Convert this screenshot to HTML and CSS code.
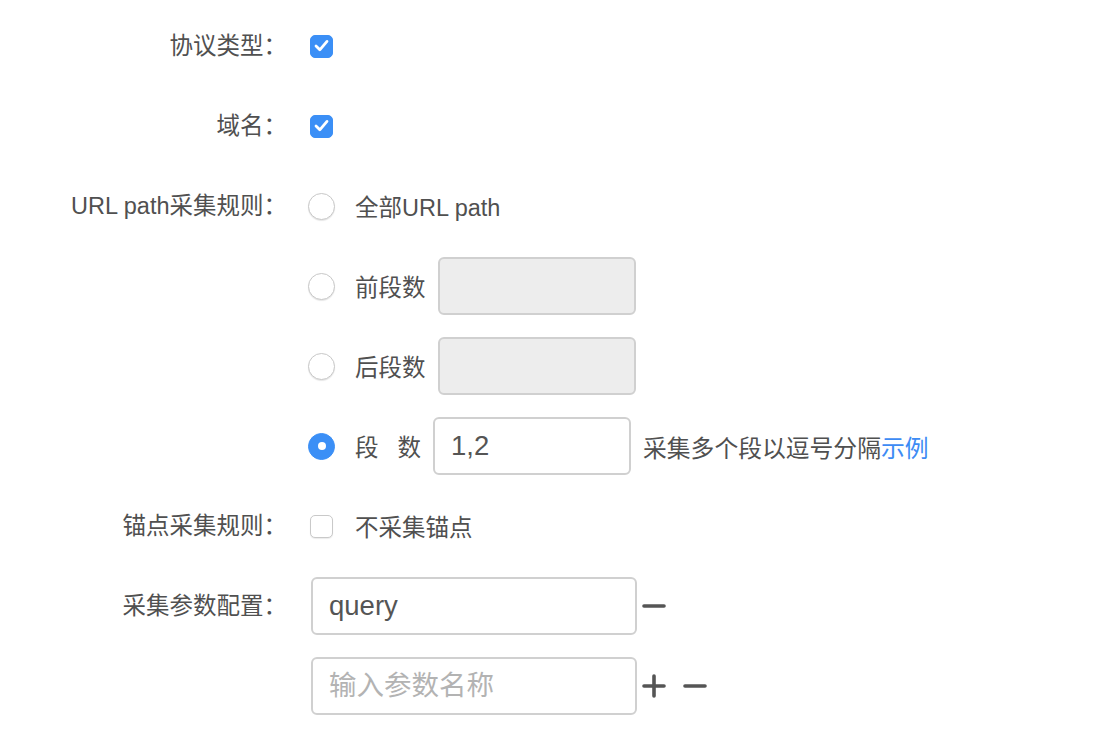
FILE: index.html
```html
<!DOCTYPE html>
<html lang="zh-CN">
<head>
<meta charset="utf-8">
<title>采集规则</title>
<link rel="stylesheet" href="styles.css">
</head>
<body>
<form class="form">
  <div class="item">
    <div class="label">协议类型：</div>
    <div class="controls">
      <div class="line"><span class="slot"><span class="checkbox checked"><svg viewBox="0 0 23 23" width="23" height="23"><path d="M6 12 L9.8 15.8 L17 7.4" fill="none" stroke="#fff" stroke-width="2.8" stroke-linecap="round" stroke-linejoin="round"/></svg></span></span></div>
    </div>
  </div>
  <div class="item">
    <div class="label">域名：</div>
    <div class="controls">
      <div class="line"><span class="slot"><span class="checkbox checked"><svg viewBox="0 0 23 23" width="23" height="23"><path d="M6 12 L9.8 15.8 L17 7.4" fill="none" stroke="#fff" stroke-width="2.8" stroke-linecap="round" stroke-linejoin="round"/></svg></span></span></div>
    </div>
  </div>
  <div class="item">
    <div class="label">URL path采集规则：</div>
    <div class="controls">
      <div class="line"><span class="slot"><span class="radio"></span></span><span class="opt">全部URL path</span></div>
      <div class="line"><span class="slot"><span class="radio"></span></span><span class="opt">前段数</span><input class="input short" type="text" disabled></div>
      <div class="line"><span class="slot"><span class="radio"></span></span><span class="opt">后段数</span><input class="input short" type="text" disabled></div>
      <div class="line"><span class="slot"><span class="radio checked"></span></span><span class="opt">段<span class="spaced">数</span></span><input class="input short" type="text" value="1,2"><span class="hint">采集多个段以逗号分隔<a class="link" href="#">示例</a></span></div>
    </div>
  </div>
  <div class="item">
    <div class="label">锚点采集规则：</div>
    <div class="controls">
      <div class="line"><span class="slot"><span class="checkbox"></span></span><span class="opt">不采集锚点</span></div>
    </div>
  </div>
  <div class="item">
    <div class="label">采集参数配置：</div>
    <div class="controls">
      <div class="line"><input class="input long" type="text" value="query"><span class="icons"><svg class="icon" viewBox="0 0 24 24" width="24" height="24"><line x1="2" y1="12" x2="22" y2="12" stroke="#555" stroke-width="3.6" stroke-linecap="round"/></svg></span></div>
      <div class="line"><input class="input long" type="text" placeholder="输入参数名称"><span class="icons"><svg class="icon" viewBox="0 0 24 24" width="24" height="24"><line x1="2" y1="12" x2="22" y2="12" stroke="#555" stroke-width="3.6" stroke-linecap="round"/><line x1="12" y1="2" x2="12" y2="22" stroke="#555" stroke-width="3.6" stroke-linecap="round"/></svg><svg class="icon" viewBox="0 0 24 24" width="24" height="24"><line x1="2" y1="12" x2="22" y2="12" stroke="#555" stroke-width="3.6" stroke-linecap="round"/></svg></span></div>
    </div>
  </div>
</form>
</body>
</html>
```

FILE: styles.css
```css
html, body {
  margin: 0;
  padding: 0;
  background: #fff;
}

body {
  font-family: "Liberation Sans", "Noto Sans CJK SC", sans-serif;
  font-size: 23.5px;
  color: #505050;
}

.form {
  padding-top: 17px;
}

.item {
  display: grid;
  grid-template-columns: 287px 1fr;
  column-gap: 21px;
  margin-bottom: 22px;
}

.label {
  height: 58px;
  line-height: 58px;
  text-align: right;
  white-space: nowrap;
}

.controls {
  display: flex;
  flex-direction: column;
  gap: 22px;
}

.line {
  display: flex;
  align-items: center;
  height: 58px;
  white-space: nowrap;
}

.slot {
  width: 27px;
  height: 27px;
  display: flex;
  align-items: center;
  justify-content: center;
  flex: none;
}

.checkbox {
  width: 23px;
  height: 23px;
  box-sizing: border-box;
  border-radius: 5px;
  border: 1.5px solid #c9c9c9;
  background: #fff;
  box-shadow: 0 1px 1px rgba(0, 0, 0, 0.08);
  display: block;
  position: relative;
}

.checkbox.checked {
  background: #3b8ff6;
  border-color: #3b8ff6;
  box-shadow: none;
}

.checkbox svg {
  position: absolute;
  left: -1.5px;
  top: -1.5px;
}

.radio {
  width: 27px;
  height: 27px;
  box-sizing: border-box;
  border-radius: 50%;
  border: 1.5px solid #c8c8c8;
  background: #fff;
  box-shadow: 0 1px 1px rgba(0, 0, 0, 0.1);
  display: block;
  position: relative;
}

.radio.checked {
  border-color: #3b8ff6;
  background: #3b8ff6;
  box-shadow: none;
}

.radio.checked::after {
  content: "";
  position: absolute;
  left: 50%;
  top: 50%;
  width: 8px;
  height: 8px;
  margin: -4px 0 0 -4px;
  border-radius: 50%;
  background: #fff;
}

.opt {
  margin-left: 20px;
  margin-right: 12px;
}

.spaced {
  margin-left: 19px;
}

.input {
  box-sizing: border-box;
  height: 58px;
  border: 2px solid #d0d0d0;
  border-radius: 6px;
  padding: 0 16px;
  font-family: "Liberation Sans", "Noto Sans CJK SC", sans-serif;
  font-size: 27.5px;
  color: #555;
  background: #fff;
  outline: none;
  margin: 0;
}

.input:disabled {
  background: #ededed;
}

.input::placeholder {
  color: #b3b3b3;
}

.input.short {
  width: 198px;
}

.input.long {
  width: 326px;
  margin-left: 3px;
}

.hint {
  margin-left: 12px;
  font-size: 23.8px;
}

.link {
  color: #3d8bf4;
  text-decoration: none;
}

.icons {
  display: flex;
  align-items: center;
  gap: 17px;
  margin-left: 5px;
}

.icon {
  display: block;
}
```
